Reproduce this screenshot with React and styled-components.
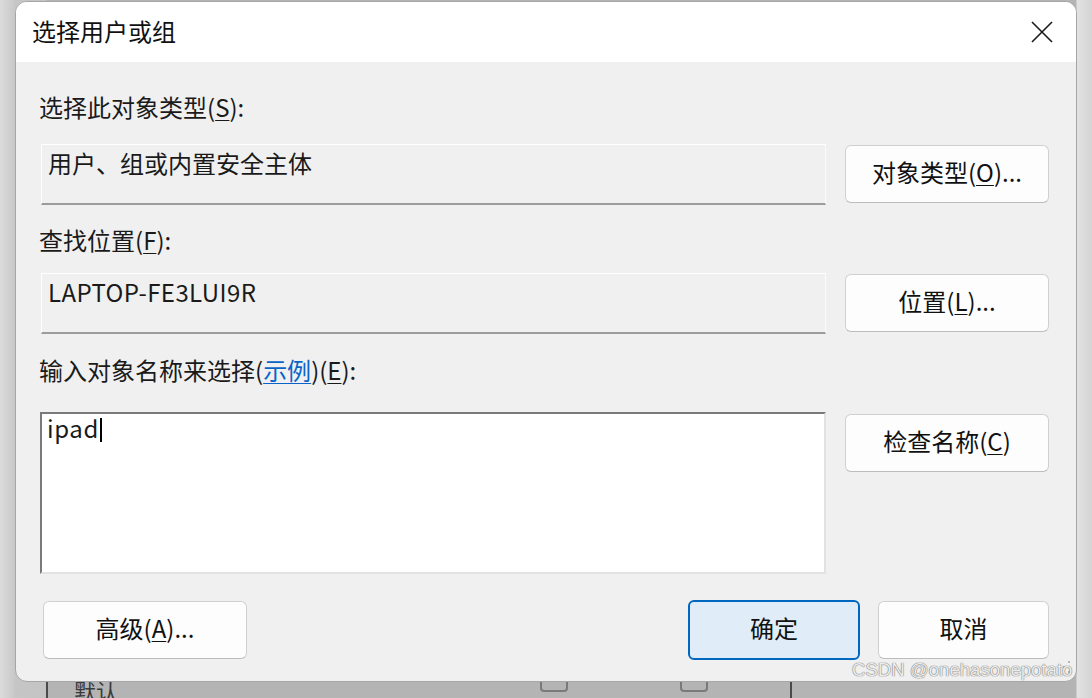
import React from 'react';
import styled, { createGlobalStyle } from 'styled-components';

const Global = createGlobalStyle`
  html, body { margin: 0; padding: 0; }
  body {
    width: 1092px;
    height: 698px;
    overflow: hidden;
    background: #b4b4b4;
    font-family: "Noto Sans CJK SC", "Noto Sans", sans-serif;
  }
`;

const Stage = styled.div`
  position: relative;
  width: 1092px;
  height: 698px;
  box-sizing: border-box;
  padding: 1px 15px 16px 15px;
  display: flex;
  background: linear-gradient(
    to right,
    #dcdcdc 0px,
    #c9c9c9 14px,
    #c6c6c6 15px,
    #c4c4c4 46px,
    #b4b4b4 47px,
    #b4b4b4 1076px,
    #e2e2e2 1077px,
    #d4d4d4 1092px
  );
`;

const BehindLine = styled.div`
  position: absolute;
  top: 682px;
  bottom: 0;
  left: ${p => p.$x}px;
  width: 2px;
  background: #4a4a4a;
`;

const BehindBox = styled.div`
  position: absolute;
  top: 670px;
  left: ${p => p.$x}px;
  width: 24px;
  height: 18px;
  border: 2px solid #7a7a7a;
  border-radius: 4px;
`;

const BehindText = styled.div`
  position: absolute;
  top: 679px;
  left: 74px;
  font-size: 22px;
  line-height: 22px;
  color: #3a3a3a;
`;

const Dialog = styled.div`
  position: relative;
  z-index: 1;
  flex: 1;
  display: flex;
  flex-direction: column;
  background: #f0f0f0;
  border: 1px solid #a6a6a6;
  border-radius: 12px;
  overflow: hidden;
  color: #1a1a1a;
`;

const TitleBar = styled.div`
  height: 60px;
  flex: none;
  background: #ffffff;
  display: flex;
  align-items: center;
  justify-content: space-between;
  padding: 0 23px 0 16px;
`;

const Title = styled.div`
  font-size: 24px;
  line-height: 28px;
  padding-bottom: 2px;
  color: #111;
`;

const CloseButton = styled.div`
  width: 22px;
  height: 22px;
  display: flex;
  align-items: center;
  justify-content: center;
`;

const Body = styled.div`
  flex: 1;
  display: flex;
  flex-direction: column;
  padding: 32px 27px 0 23px;
`;

const Label = styled.div`
  font-size: 24px;
  line-height: 26px;
  padding-bottom: 4px;
  margin-top: ${p => p.$mt || 0}px;
  white-space: nowrap;
`;

const Key = styled.span`
  text-decoration: underline;
  text-decoration-thickness: 1px;
  text-underline-offset: 3px;
`;

const Link = styled.span`
  color: #0a64c8;
  text-decoration: underline;
  text-decoration-thickness: 1px;
  text-underline-offset: 3px;
`;

const Row = styled.div`
  display: grid;
  grid-template-columns: 1fr 204px;
  column-gap: 19px;
  align-items: start;
  margin-top: ${p => p.$mt || 0}px;
`;

const Field = styled.div`
  box-sizing: border-box;
  height: 61px;
  margin-left: 2px;
  background: #f0f0f0;
  border-top: 1px solid #ffffff;
  border-left: 1px solid #ffffff;
  border-right: 1px solid #fbfbfb;
  border-bottom: 2px solid #9c9c9c;
  padding: 3px 6px;
  font-size: 24px;
  line-height: 30px;
  letter-spacing: ${p => (p.$latin ? 0.4 : 0)}px;
  white-space: nowrap;
`;

const TextArea = styled.div`
  box-sizing: border-box;
  height: 162px;
  margin-left: 1px;
  background: #ffffff;
  border-top: 2px solid #7a7a7a;
  border-left: 2px solid #7a7a7a;
  border-right: 2px solid #e2e2e2;
  border-bottom: 2px solid #e2e2e2;
  padding: 0 5px;
  font-size: 24px;
  line-height: 28px;
  letter-spacing: 0.6px;
  display: flex;
  align-items: flex-start;
`;

const Caret = styled.span`
  display: inline-block;
  width: 2px;
  height: 24px;
  background: #000;
  margin-top: 4px;
  margin-left: 1px;
`;

const Button = styled.div`
  box-sizing: border-box;
  width: ${p => p.$w || 204}px;
  height: ${p => (p.$primary ? 60 : 58)}px;
  margin-top: ${p => p.$mt || 0}px;
  margin-left: ${p => p.$ml || 0}px;
  padding-bottom: 4px;
  display: flex;
  align-items: center;
  justify-content: center;
  font-size: 24px;
  line-height: 30px;
  color: #111;
  white-space: nowrap;
  border-radius: 6px;
  background: ${p => (p.$primary ? '#e0edf8' : '#fdfdfd')};
  border: ${p => (p.$primary ? '2px solid #0067c0' : '1px solid #d0d0d0')};
  border-bottom-color: ${p => (p.$primary ? '#0067c0' : '#bcbcbc')};
`;

const Footer = styled.div`
  display: flex;
  align-items: center;
  margin-top: 26px;
`;

const FooterRight = styled.div`
  margin-left: auto;
  display: flex;
  align-items: center;
  gap: 18px;
`;

const Grip = styled.svg`
  position: absolute;
  right: 4px;
  bottom: 6px;
`;

const Watermark = styled.div`
  position: absolute;
  z-index: 2;
  left: 852px;
  top: 657px;
  font-family: "Liberation Sans", Arial, sans-serif;
  font-size: 18.6px;
  line-height: 26px;
  color: rgba(250, 250, 250, 0.92);
  text-shadow: 0 0 1px #6a6a6a, 0 0 1px #6a6a6a;
  white-space: nowrap;
`;

export default function App() {
  return (
    <>
      <Global />
      <Stage>
        <BehindLine $x={46} />
        <BehindLine $x={790} />
        <BehindBox $x={540} />
        <BehindBox $x={680} />
        <BehindText>默认</BehindText>
        <Dialog>
          <TitleBar>
            <Title>选择用户或组</Title>
            <CloseButton>
              <svg width="22" height="22" viewBox="0 0 22 22">
                <path d="M1 1 L21 21 M21 1 L1 21" stroke="#1a1a1a" strokeWidth="1.6" fill="none" />
              </svg>
            </CloseButton>
          </TitleBar>
          <Body>
            <Label>选择此对象类型(<Key>S</Key>):</Label>
            <Row $mt={20}>
              <Field>用户、组或内置安全主体</Field>
              <Button $mt={1}>对象类型(<Key>O</Key>)...</Button>
            </Row>
            <Label $mt={22}>查找位置(<Key>F</Key>):</Label>
            <Row $mt={16}>
              <Field $latin>LAPTOP-FE3LUI9R</Field>
              <Button $mt={1}>位置(<Key>L</Key>)...</Button>
            </Row>
            <Label $mt={23}>
              输入对象名称来选择(<Link>示例</Link>)(<Key>E</Key>):
            </Label>
            <Row $mt={25}>
              <TextArea>
                ipad<Caret />
              </TextArea>
              <Button $mt={2}>检查名称(<Key>C</Key>)</Button>
            </Row>
            <Footer>
              <Button $ml={4}>高级(<Key>A</Key>)...</Button>
              <FooterRight>
                <Button $primary $w={172}>确定</Button>
                <Button $w={171}>取消</Button>
              </FooterRight>
            </Footer>
          </Body>
          <Grip width="12" height="14" viewBox="0 0 12 14">
            <rect x="8" y="0" width="2" height="2" fill="#b8b8b8" />
            <rect x="8" y="5" width="2" height="2" fill="#b8b8b8" />
            <rect x="3" y="5" width="2" height="2" fill="#b8b8b8" />
            <rect x="8" y="10" width="2" height="2" fill="#b8b8b8" />
            <rect x="3" y="10" width="2" height="2" fill="#b8b8b8" />
          </Grip>
        </Dialog>
        <Watermark>CSDN @onehasonepotato</Watermark>
      </Stage>
    </>
  );
}
